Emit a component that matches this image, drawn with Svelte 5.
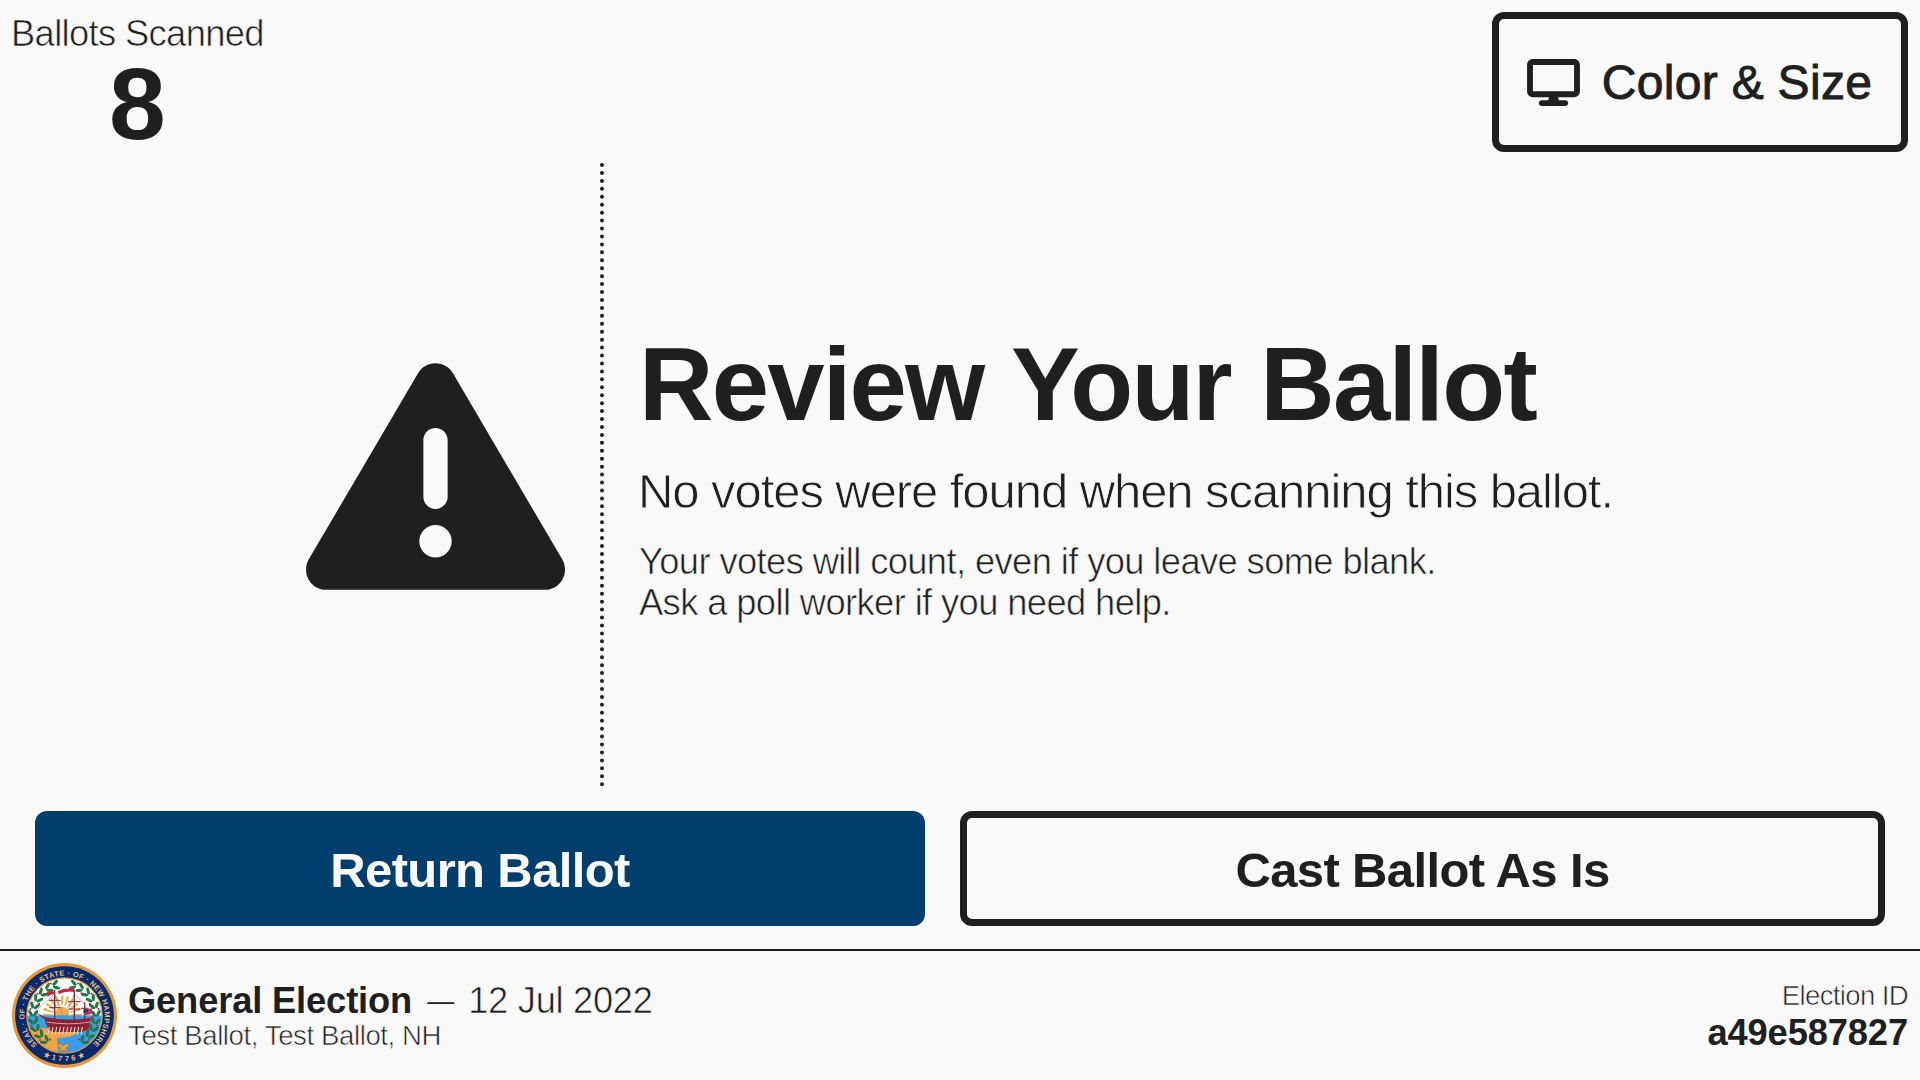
<script>
  const ballotsScanned = 8;
  const electionId = 'a49e587827';

  const centre = 157.5;
  const polar = (deg, r) => {
    const a = (deg * Math.PI) / 180;
    return [centre + r * Math.sin(a), centre - r * Math.cos(a)];
  };

  // Wreath foliage, mirrored left and right of the seal's vertical axis.
  const leaves = [];
  const berries = [];
  for (const side of [-1, 1]) {
    for (let i = 0; i < 10; i++) {
      const deg = side * (16 + i * 14);
      for (const [r, tilt] of [[102, 32], [87, -32]]) {
        const [x, y] = polar(deg, r);
        leaves.push({ x, y, turn: deg + side * tilt });
      }
      const [bx, by] = polar(deg + side * 7, i % 2 ? 84 : 104);
      berries.push({ x: bx, y: by });
    }
  }
  const rays = Array.from({ length: 11 }, (_, i) => -90 + i * 18);
  const oars = Array.from({ length: 10 }, (_, i) => 112 + i * 11);
</script>

<div class="screen">
  <header>
    <div class="counter">
      <div class="counter-label">Ballots Scanned</div>
      <div class="counter-value">{ballotsScanned}</div>
    </div>
    <button class="settings">
      <svg class="display-icon" viewBox="0 0 576 512" aria-hidden="true">
        <path d="M64 0C28.7 0 0 28.7 0 64V352c0 35.3 28.7 64 64 64H240l-10.7 32H160c-17.7 0-32 14.3-32 32s14.3 32 32 32H416c17.7 0 32-14.3 32-32s-14.3-32-32-32H346.7L336 416H512c35.3 0 64-28.7 64-64V64c0-35.3-28.7-64-64-64H64zM512 64V352H64V64H512z" />
      </svg>
      <span>Color &amp; Size</span>
    </button>
  </header>

  <main>
    <div class="icon-pane">
      <svg class="warning-icon" viewBox="0 0 512 512" aria-hidden="true">
        <path d="M256 32c14.2 0 27.3 7.5 34.5 19.8l216 368c7.3 12.4 7.3 27.7 .2 40.1S486.3 480 472 480H40c-14.3 0-27.6-7.7-34.7-20.1s-7-27.8 .2-40.1l216-368C228.7 39.5 241.8 32 256 32zm0 128c-13.3 0-24 10.7-24 24V296c0 13.3 10.7 24 24 24s24-10.7 24-24V184c0-13.3-10.7-24-24-24zm32 224a32 32 0 1 0 -64 0 32 32 0 1 0 64 0z" />
      </svg>
    </div>
    <div class="message">
      <h1>Review Your Ballot</h1>
      <p class="lead">No votes were found when scanning this ballot.</p>
      <p class="note">Your votes will count, even if you leave some blank.<br />Ask a poll worker if you need help.</p>
    </div>
  </main>

  <div class="actions">
    <button class="action primary">Return Ballot</button>
    <button class="action secondary">Cast Ballot As Is</button>
  </div>

  <footer>
    <svg class="seal" viewBox="0 0 315 315" aria-hidden="true">
      <defs>
        <clipPath id="disc"><circle cx="157.5" cy="157.5" r="111" /></clipPath>
        <path id="arc-top" d="M75.7 245.3A120 120 0 1 1 239.3 245.3" />
        <path id="arc-bottom" d="M93 278.5A137 137 0 0 0 222 278.5" />
      </defs>
      <circle cx="157.5" cy="157.5" r="157.5" fill="#e8973a" />
      <circle cx="157.5" cy="157.5" r="148" fill="#052b6e" />
      <circle cx="157.5" cy="157.5" r="115" fill="#e8973a" />
      <g clip-path="url(#disc)">
        <rect x="40" y="40" width="235" height="120" fill="#fff" />
        <g fill="#f3ab4b">
          {#each rays as deg}
            <path d="M150 158L146 98L154 98Z" transform="rotate({deg} 150 156)" />
          {/each}
          <circle cx="150" cy="152" r="23" stroke="#fff" stroke-width="4" />
        </g>
        <rect x="40" y="157" width="235" height="120" fill="#3aa0e8" />
        <path d="M40 196H130Q175 205 215 202L172 222L134 226L140 275H40Z" fill="#f0a445" />
        <path d="M150 226Q200 218 240 206L230 240L180 275H150L165 244Z" fill="#3a9cf0" />
        <path d="M64 145L100 163Q170 176 237 164L232 192Q225 206 205 207H122Q104 200 98 168Z" fill="#8c2332" />
        <path d="M104 177Q170 188 234 177" fill="none" stroke="#d5a3a0" stroke-width="3" />
        <g stroke="#f7e9dc" stroke-width="3">
          {#each oars as x}
            <path d="M{x} 192L{x - 4} 214" />
          {/each}
        </g>
        <g fill="none" stroke="#7b2a35">
          <path d="M128 80V172M187 82V172M218 118V172" stroke-width="4" />
          <path d="M110 112H146M112 134H146M168 116H206M170 138H206M207 136H230" stroke-width="3" />
          <path d="M68 147L128 92L158 170L187 90L218 126L238 165" stroke="#8b7c7c" stroke-width="1.5" />
        </g>
        <g fill="#1f7a45">
          {#each leaves as leaf}
            <ellipse cx={leaf.x} cy={leaf.y} rx="11" ry="4.8" transform="rotate({leaf.turn} {leaf.x} {leaf.y})" />
          {/each}
        </g>
        <g fill="#c41f3a">
          {#each berries as berry}
            <circle cx={berry.x} cy={berry.y} r="3" />
          {/each}
        </g>
        <path d="M104 90Q112 80 128 86V94Q114 92 107 102ZM138 84Q160 74 187 78V87Q162 82 140 94Z" fill="#d0203c" />
        <path d="M214 140L240 136V152L216 158Z" fill="#c4324b" />
        <path d="M214 140L228 138V148L215 151Z" fill="#23356f" />
        <path d="M138 240L153 248L170 240V250L160 256L174 268L153 262L134 268L147 256L138 250Z" fill="#efa03c" stroke="#a76a1e" stroke-width="1.5" />
      </g>
      <g class="seal-text">
        <text><textPath href="#arc-top" textLength="570">SEAL · OF · THE · STATE · OF · NEW HAMPSHIRE</textPath></text>
        <text><textPath href="#arc-bottom" textLength="128">★1776★</textPath></text>
      </g>
    </svg>
    <div class="election">
      <div class="title"><b>General Election</b> <span class="dash">—</span> <span class="date">12 Jul 2022</span></div>
      <div class="place">Test Ballot, Test Ballot, NH</div>
    </div>
    <div class="election-id">
      <div class="id-label">Election ID</div>
      <div class="id-value">{electionId}</div>
    </div>
  </footer>
</div>

<style>
  :global(body) {
    margin: 0;
    background: #f9f9f9;
  }

  .screen {
    --ink: #1f1f1f;
    --paper: #f9f9f9;
    display: flex;
    flex-direction: column;
    box-sizing: border-box;
    width: 1920px;
    height: 1080px;
    overflow: hidden;
    background: var(--paper);
    color: var(--ink);
    font-family: "Liberation Sans", Helvetica, Arial, sans-serif;
    font-size: 36.3px;
  }

  button {
    box-sizing: border-box;
    margin: 0;
    font-family: inherit;
    color: inherit;
    border-radius: 12px;
  }

  header {
    display: flex;
    justify-content: space-between;
    align-items: flex-start;
    box-sizing: border-box;
    height: 163px;
    padding: 12px 12px 0;
  }

  .counter {
    margin-left: -1px;
    padding-top: 1px;
    text-align: center;
  }

  /* A paper-coloured stroke over the fill gives the text a light weight. */
  .counter-label,
  .note,
  .date,
  .place,
  .id-label {
    -webkit-text-stroke: 0.6px var(--paper);
  }

  .counter-label {
    line-height: 41px;
    letter-spacing: -0.63px;
  }

  .counter-value {
    margin-top: 8px;
    font-size: 102px;
    font-weight: 700;
    line-height: 85px;
  }

  .settings {
    display: flex;
    align-items: center;
    justify-content: center;
    gap: 22px;
    width: 416px;
    height: 140px;
    padding: 0 1px 0 0;
    background: transparent;
    border: 7px solid var(--ink);
    font-size: 48px;
    letter-spacing: 0.3px;
    -webkit-text-stroke: 0.9px var(--ink);
  }

  .settings span {
    padding-top: 1px;
  }

  .display-icon {
    width: 53px;
    height: 47px;
    fill: var(--ink);
    -webkit-text-stroke: 0;
  }

  main {
    display: flex;
    height: 624px;
  }

  .icon-pane {
    display: flex;
    align-items: center;
    justify-content: flex-end;
    box-sizing: border-box;
    width: 600px;
    padding: 2px 35px 0 0;
  }

  .warning-icon {
    width: 259px;
    height: 259px;
    fill: var(--ink);
  }

  .message {
    display: flex;
    flex: 1;
    flex-direction: column;
    justify-content: center;
    padding: 0 0 4px 36px;
    border-left: 4px dotted var(--ink);
  }

  h1 {
    margin: 0 0 0 -1px;
    font-size: 103px;
    font-weight: 700;
    line-height: 124px;
    letter-spacing: -1.75px;
    word-spacing: 2.5px;
  }

  p {
    margin: 0;
  }

  .lead {
    margin: 15px 0 21px -2px;
    font-size: 49px;
    line-height: 58px;
    letter-spacing: -1.07px;
    -webkit-text-stroke: 0.8px var(--paper);
  }

  .note {
    margin-left: -1px;
    line-height: 41px;
    letter-spacing: -0.6px;
  }

  .actions {
    display: flex;
    gap: 35px;
    margin: 24px 35px 23px;
  }

  .action {
    height: 115px;
    padding: 2px 0 0;
    font-size: 49px;
    font-weight: 700;
    letter-spacing: -0.63px;
  }

  .primary {
    width: 890px;
    background: #003f6d;
    border: none;
    color: var(--paper);
  }

  .secondary {
    width: 925px;
    background: transparent;
    border: 7px solid var(--ink);
  }

  footer {
    display: flex;
    flex: 1;
    align-items: center;
    padding: 0 12px;
    border-top: 2px solid var(--ink);
  }

  .seal {
    width: 105px;
    height: 105px;
    margin-right: 11px;
  }

  .seal-text {
    font-size: 22px;
    font-weight: 700;
    fill: #e9bf86;
  }

  .election {
    flex: 1;
    padding-top: 1px;
  }

  .title {
    line-height: 38px;
    white-space: pre;
  }

  .title b {
    letter-spacing: -0.15px;
  }

  .dash {
    margin: 0 4px 0 5px;
    font-size: 27px;
    vertical-align: 3px;
    line-height: 1;
  }

  .date {
    letter-spacing: -0.3px;
  }

  .place,
  .id-label {
    font-size: 27.6px;
    line-height: 31px;
    letter-spacing: -0.41px;
  }

  .id-label {
    letter-spacing: -0.65px;
  }

  .election-id {
    text-align: right;
  }

  .id-value {
    margin-top: 3px;
    font-weight: 700;
    line-height: 38px;
    letter-spacing: -0.13px;
  }
</style>
